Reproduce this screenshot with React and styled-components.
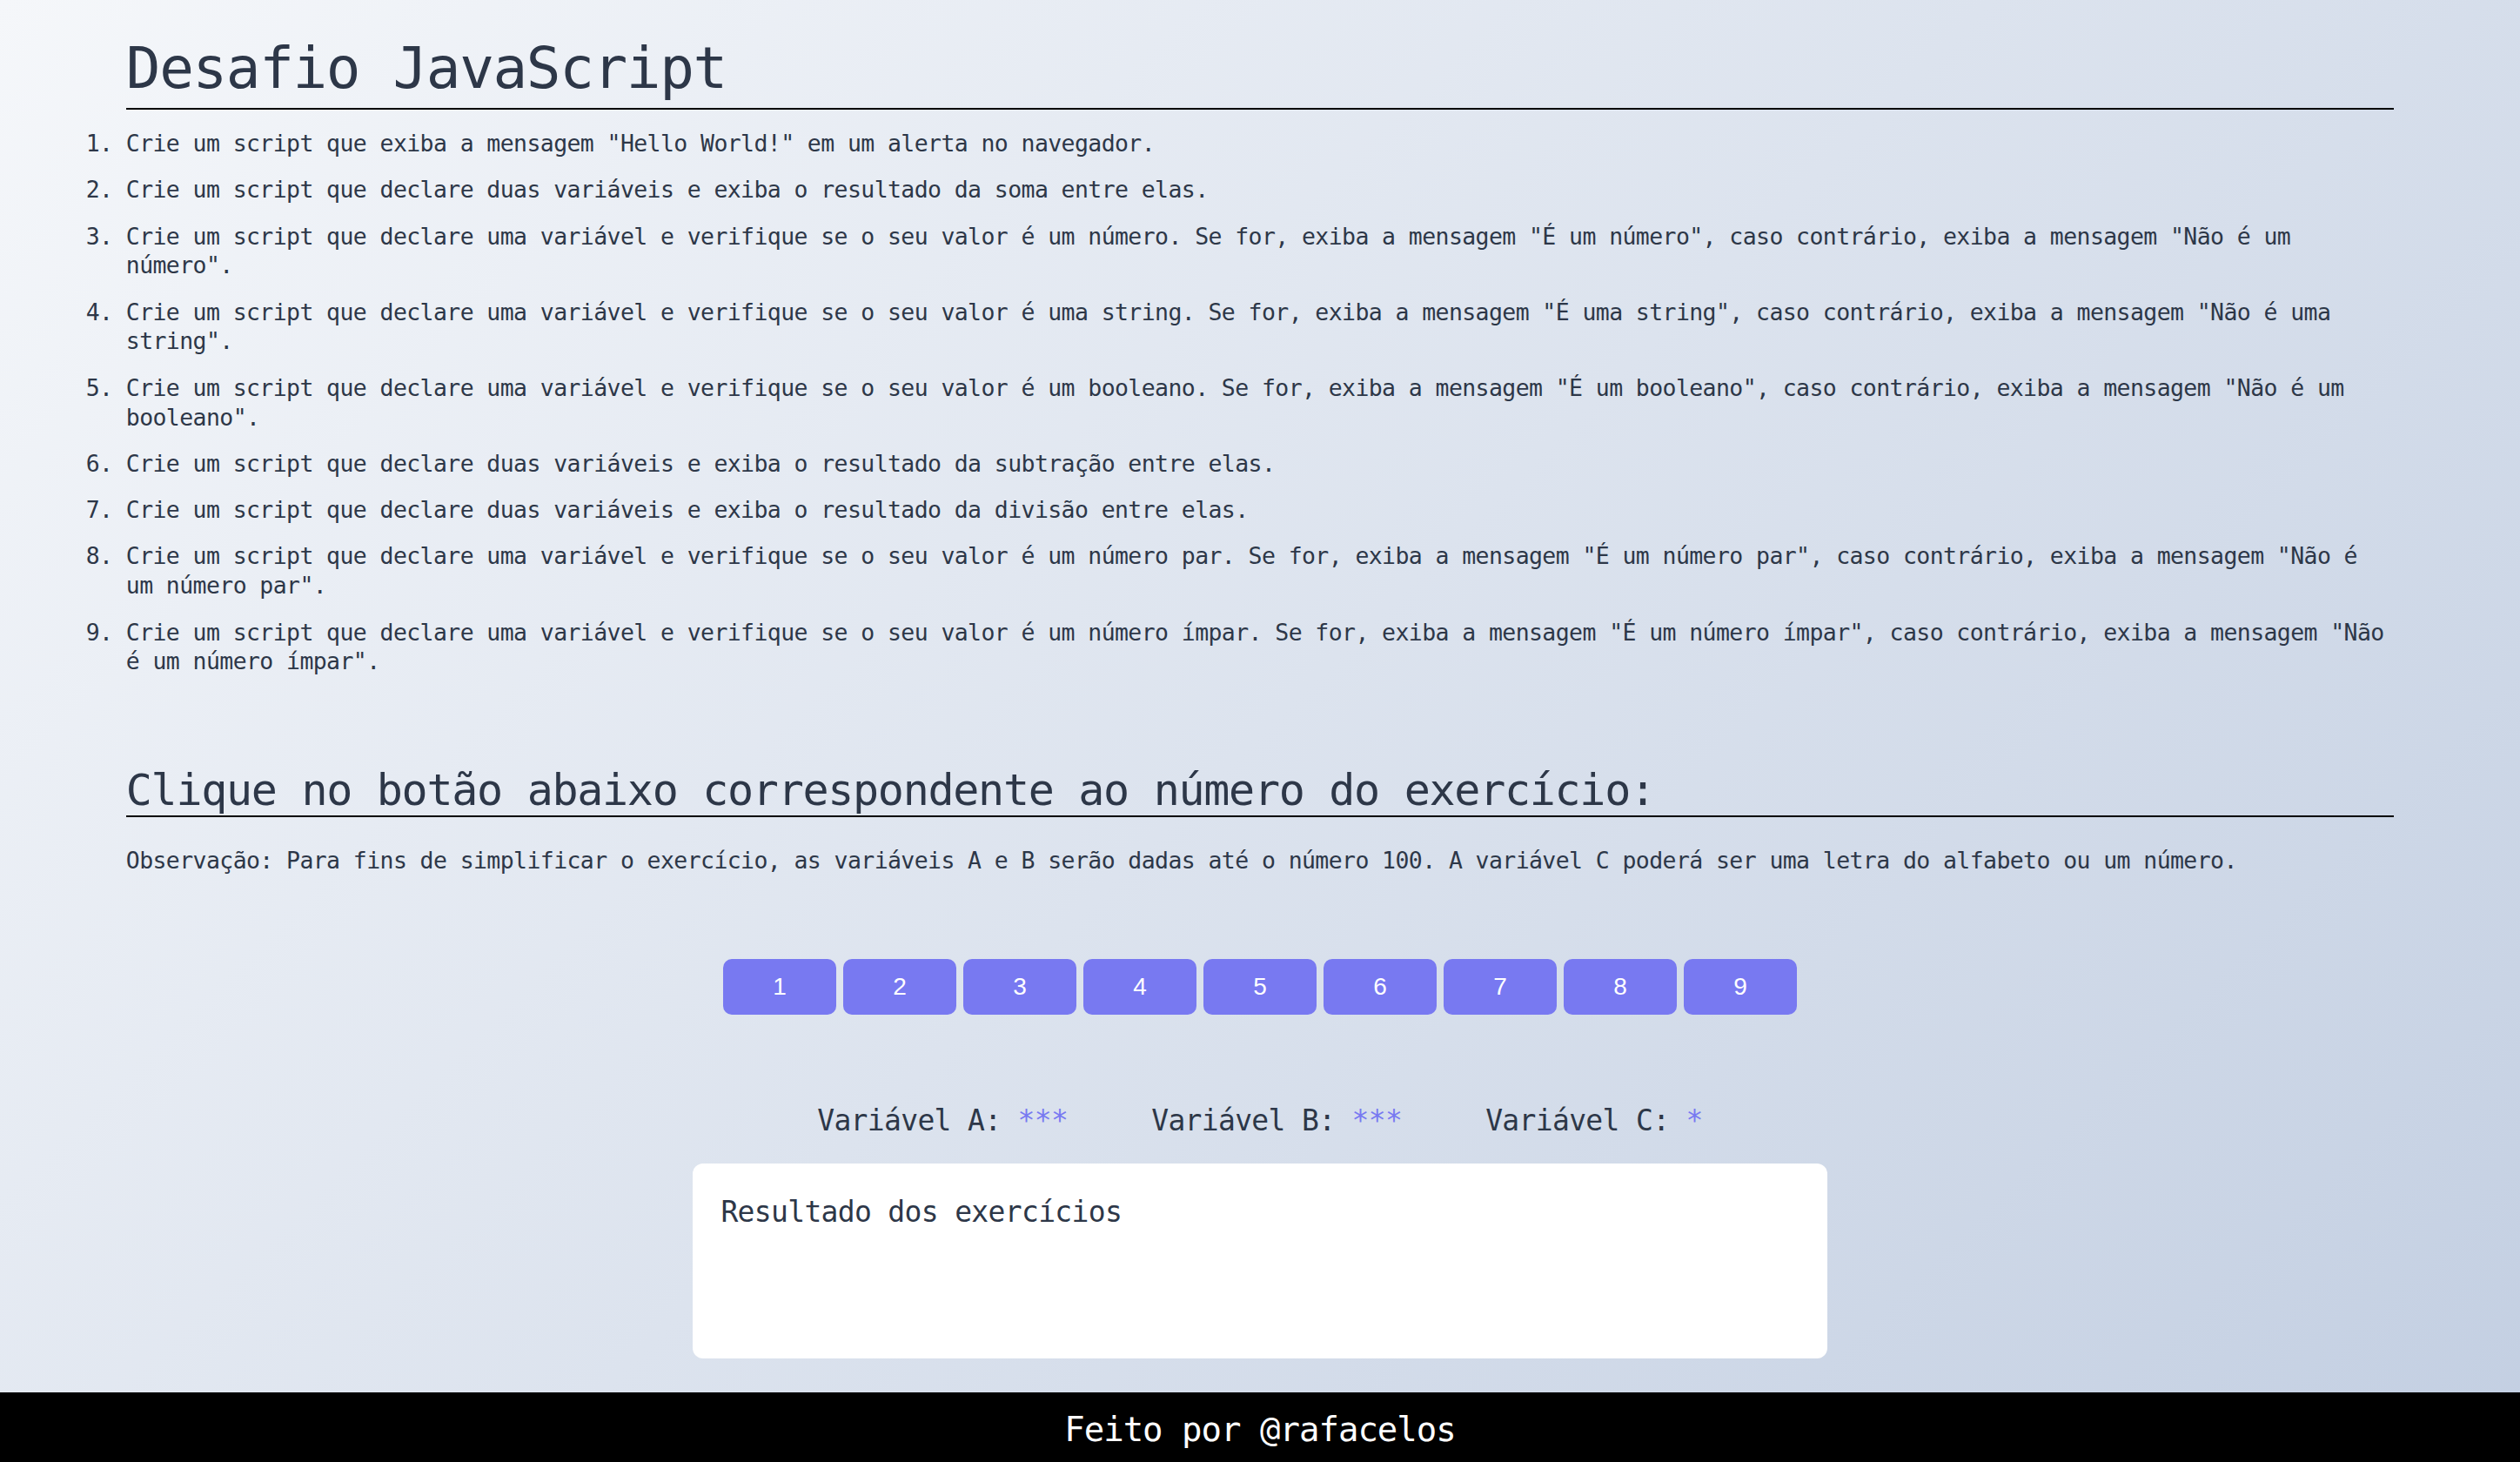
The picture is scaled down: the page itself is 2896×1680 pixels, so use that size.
import React from 'react';
import styled, { createGlobalStyle } from 'styled-components';

const exercises = [
    'Crie um script que exiba a mensagem "Hello World!" em um alerta no navegador.',
    'Crie um script que declare duas variáveis e exiba o resultado da soma entre elas.',
    'Crie um script que declare uma variável e verifique se o seu valor é um número. Se for, exiba a mensagem "É um número", caso contrário, exiba a mensagem "Não é um número".',
    'Crie um script que declare uma variável e verifique se o seu valor é uma string. Se for, exiba a mensagem "É uma string", caso contrário, exiba a mensagem "Não é uma string".',
    'Crie um script que declare uma variável e verifique se o seu valor é um booleano. Se for, exiba a mensagem "É um booleano", caso contrário, exiba a mensagem "Não é um booleano".',
    'Crie um script que declare duas variáveis e exiba o resultado da subtração entre elas.',
    'Crie um script que declare duas variáveis e exiba o resultado da divisão entre elas.',
    'Crie um script que declare uma variável e verifique se o seu valor é um número par. Se for, exiba a mensagem "É um número par", caso contrário, exiba a mensagem "Não é um número par".',
    'Crie um script que declare uma variável e verifique se o seu valor é um número ímpar. Se for, exiba a mensagem "É um número ímpar", caso contrário, exiba a mensagem "Não é um número ímpar".'
]

const variables = [
    { name: 'A', value: '***' },
    { name: 'B', value: '***' },
    { name: 'C', value: '*' }
]

const GlobalStyle = createGlobalStyle`
    * {
        box-sizing: border-box;
    }
    body {
        margin: 0;
        font-family: "DejaVu Sans Mono", "Liberation Mono", monospace;
        color: #2d3748;
        background: linear-gradient(135deg, #f5f7fa 0%, #c3cfe2 100%);
        min-height: 100vh;
    }
`

const Page = styled.div`
    display: flex;
    flex-direction: column;
    min-height: 100vh;
`

const Main = styled.main`
    flex: 1;
    width: 90%;
    margin: 0 auto;
    padding-top: 39px;
`

const Title = styled.h1`
    margin: 0;
    font-size: 66px;
    font-weight: 400;
    letter-spacing: -1.4px;
    line-height: 80px;
    padding-bottom: 5px;
    border-bottom: 2px solid #000;
`

const TaskList = styled.ol`
    margin: 22px 0 0;
    padding: 0;
    font-size: 26.5px;
    letter-spacing: -0.6px;
    line-height: 33.8px;

    & > li + li {
        margin-top: 19.5px;
    }
`

const Subtitle = styled.h2`
    margin: 102px 0 0;
    font-size: 50px;
    font-weight: 400;
    letter-spacing: -1.3px;
    line-height: 58px;
    border-bottom: 2px solid #000;
`

const Note = styled.p`
    margin: 33px 0 0;
    font-size: 26.5px;
    letter-spacing: -0.6px;
    line-height: 33.3px;
`

const ButtonRow = styled.div`
    display: flex;
    justify-content: center;
    gap: 8px;
    margin-top: 97px;
`

const NumberButton = styled.button`
    width: 130px;
    height: 63.3px;
    border: none;
    border-radius: 10px;
    background: #7879f1;
    color: #fff;
    font-family: "Liberation Sans", Arial, sans-serif;
    font-size: 28px;
    cursor: pointer;
`

const VariableRow = styled.div`
    display: flex;
    justify-content: center;
    gap: 96px;
    margin-top: 102px;
    font-size: 33px;
    letter-spacing: -0.67px;
    line-height: 40px;
`

const Stars = styled.span`
    color: #7879f1;
`

const ResultBox = styled.div`
    width: 50%;
    height: 224px;
    margin: 29.7px auto 0;
    padding: 35px 32px 32px;
    background: #fff;
    border-radius: 12px;
    font-size: 33px;
    letter-spacing: -0.67px;
    line-height: 42.9px;
`

const Footer = styled.footer`
    height: 80px;
    padding-top: 5px;
    display: flex;
    align-items: center;
    justify-content: center;
    background: #000;
    color: #fff;
    font-size: 39px;
    letter-spacing: -1px;
`

const App = () => {
    return (
        <Page>
            <GlobalStyle />
            <Main>
                <Title>Desafio JavaScript</Title>
                <TaskList>
                    {exercises.map((text, i) => (
                        <li key={i}>{text}</li>
                    ))}
                </TaskList>
                <Subtitle>Clique no botão abaixo correspondente ao número do exercício:</Subtitle>
                <Note>
                    Observação: Para fins de simplificar o exercício, as variáveis A e B serão dadas até o número 100. A variável C poderá ser uma letra do alfabeto ou um número.
                </Note>
                <ButtonRow>
                    {exercises.map((_, i) => (
                        <NumberButton key={i}>{i + 1}</NumberButton>
                    ))}
                </ButtonRow>
                <VariableRow>
                    {variables.map(v => (
                        <span key={v.name}>
                            Variável {v.name}: <Stars>{v.value}</Stars>
                        </span>
                    ))}
                </VariableRow>
                <ResultBox>Resultado dos exercícios</ResultBox>
            </Main>
            <Footer>Feito por @rafacelos</Footer>
        </Page>
    )
}

export default App
